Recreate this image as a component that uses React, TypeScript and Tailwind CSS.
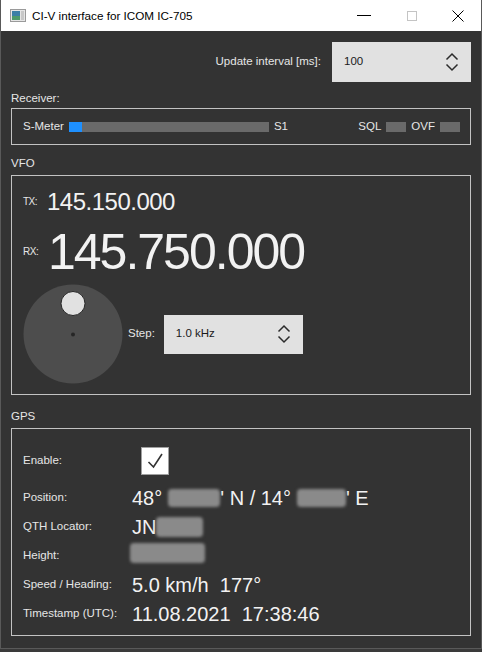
import React from "react";

function Chevrons() {
  return (
    <svg width="14" height="20" viewBox="0 0 14 20" className="shrink-0">
      <polyline points="1.5,7.5 7,2 12.5,7.5" fill="none" stroke="#2b2b2b" strokeWidth="1.5" />
      <polyline points="1.5,12.5 7,18 12.5,12.5" fill="none" stroke="#2b2b2b" strokeWidth="1.5" />
    </svg>
  );
}

function Blur({ className }: { className: string }) {
  return <span className={"inline-block rounded-[4px] bg-[#8a8a8a] blur-[1.5px] " + className} />;
}

function TitleBar() {
  return (
    <div className="h-[31px] bg-white flex items-center text-black shrink-0">
      <svg width="16" height="13" viewBox="0 0 16 13" className="ml-[9px]">
        <rect x="0.5" y="0.5" width="15" height="12" fill="#e6e6e6" stroke="#9a9a9a" />
        <rect x="2" y="2" width="8" height="9" fill="#3c7fa6" />
        <rect x="2" y="7" width="8" height="4" fill="#4e9a6a" />
        <rect x="11" y="2" width="3" height="9" fill="#c8c8c8" />
      </svg>
      <span className="ml-[6px] text-[11.7px]">CI-V interface for ICOM IC-705</span>
      <div className="ml-auto flex items-center h-full">
        <div className="w-[46px] h-full flex items-center justify-center">
          <div className="w-[14px] h-px bg-black" />
        </div>
        <div className="w-[46px] h-full flex items-center justify-center ml-[2px]">
          <div className="w-[10px] h-[10px] border border-[#c4c4c4]" />
        </div>
        <div className="w-[46px] h-full flex items-center justify-center">
          <svg width="12" height="12" viewBox="0 0 12 12">
            <path d="M0.5 0.5 L11.5 11.5 M11.5 0.5 L0.5 11.5" stroke="#000" strokeWidth="1" />
          </svg>
        </div>
      </div>
    </div>
  );
}

function SectionLabel({ children, cls }: { children: React.ReactNode; cls: string }) {
  return <div className={"leading-[16px] text-[#e6e6e6] " + cls}>{children}</div>;
}

function Dial() {
  return (
    <svg width="100" height="100" viewBox="0 0 100 100" className="shrink-0">
      <circle cx="50" cy="50" r="49.5" fill="#4d4d4d" />
      <circle cx="50" cy="19.5" r="12" fill="#e1e1e1" stroke="#262626" strokeWidth="1" />
      <circle cx="50" cy="50.5" r="2" fill="#262626" />
    </svg>
  );
}

const gpsRows: { label: string; value: React.ReactNode }[] = [
  {
    label: "Position:",
    value: (
      <span className="flex items-center">
        48°<Blur className="w-[52px] h-[18px] ml-[6px]" />' N / 14°<Blur className="w-[49px] h-[18px] ml-[6px]" />' E
      </span>
    ),
  },
  {
    label: "QTH Locator:",
    value: (
      <span className="flex items-center">
        JN<Blur className="w-[47px] h-[20px]" />
      </span>
    ),
  },
  { label: "Height:", value: <Blur className="w-[75px] h-[20px] -ml-[2px]" /> },
  { label: "Speed / Heading:", value: <span className="whitespace-pre">5.0 km/h  177°</span> },
  { label: "Timestamp (UTC):", value: <span className="whitespace-pre">11.08.2021  17:38:46</span> },
];

export default function App() {
  return (
    <div className="w-[482px] h-[652px] bg-[#3a3a3a] overflow-hidden" style={{ fontFamily: '"Liberation Sans", Arial, sans-serif' }}>
      <div className="h-[649px] flex flex-col border-x border-b border-[#595959] bg-[#333333] text-[11.5px]">
        <TitleBar />
        <div className="flex-1 px-[10px] flex flex-col">
          <div className="flex items-center justify-end mt-[11px] gap-[11px]">
            <span className="text-[#e6e6e6]">Update interval [ms]:</span>
            <div className="w-[139px] h-[40px] bg-[#e1e1e1] flex items-center pl-[12px] pr-[12px] text-[#1a1a1a]">
              <span>100</span>
              <span className="ml-auto">
                <Chevrons />
              </span>
            </div>
          </div>

          <SectionLabel cls="mt-[8px] mb-[2px]">Receiver:</SectionLabel>
          <div className="h-[37px] border border-[#c3c3c3] flex items-center pl-[11px] pr-[10px] text-[#e6e6e6]">
            <span>S-Meter</span>
            <div className="ml-[5px] w-[200px] h-[10px] bg-[#6a6a6a] flex">
              <div className="w-[13px] h-full bg-[#1e90ff]" />
            </div>
            <span className="ml-[5px]">S1</span>
            <span className="ml-auto">SQL</span>
            <div className="ml-[5px] w-[20px] h-[10px] bg-[#6a6a6a]" />
            <span className="ml-[5px]">OVF</span>
            <div className="ml-[5px] w-[20px] h-[10px] bg-[#6a6a6a]" />
          </div>

          <SectionLabel cls="mt-[10px] mb-[4px]">VFO</SectionLabel>
          <div className="border border-[#c3c3c3] pl-[11px] pt-[12px] pb-[10px] text-[#f2f2f2]">
            <div className="flex items-center h-[28px] leading-[28px]">
              <span className="text-[10px] tracking-[-0.5px] w-[24px] text-[#e6e6e6]">TX:</span>
              <span className="text-[24px] tracking-[-0.5px]">145.150.000</span>
            </div>
            <div className="flex items-center h-[56px] leading-[56px] mt-[8px]">
              <span className="text-[10px] tracking-[-0.5px] w-[25px] text-[#e6e6e6]">RX:</span>
              <span className="text-[50px] tracking-[-2px]">145.750.000</span>
            </div>
            <div className="flex items-center mt-[4px]">
              <Dial />
              <span className="ml-[5px] text-[#e6e6e6]">Step:</span>
              <div className="ml-[9px] w-[139px] h-[39px] bg-[#e1e1e1] flex items-center pl-[12px] pr-[12px] text-[#1a1a1a]">
                <span>1.0 kHz</span>
                <span className="ml-auto">
                  <Chevrons />
                </span>
              </div>
            </div>
          </div>

          <SectionLabel cls="mt-[13px] mb-[4px]">GPS</SectionLabel>
          <div className="border border-[#c3c3c3] pl-[11px] pt-[17px] pb-[7px] text-[#e6e6e6]">
            <div className="flex items-center h-[29px] mb-[8px]">
              <span className="w-[109px]">Enable:</span>
              <div className="ml-[9px] w-[28px] h-[28px] bg-white border border-[#a0a0a0] flex items-center justify-center">
                <svg width="18" height="18" viewBox="0 0 18 18">
                  <polyline points="2.5,10 7.5,15 16,2" fill="none" stroke="#333" strokeWidth="1.6" />
                </svg>
              </div>
            </div>
            {gpsRows.map((r) => (
              <div key={r.label} className="flex items-center h-[29px]">
                <span className="w-[109px] shrink-0">{r.label}</span>
                <div className="text-[20px] text-[#f2f2f2] leading-[24px]">{r.value}</div>
              </div>
            ))}
          </div>
        </div>
      </div>
    </div>
  );
}
